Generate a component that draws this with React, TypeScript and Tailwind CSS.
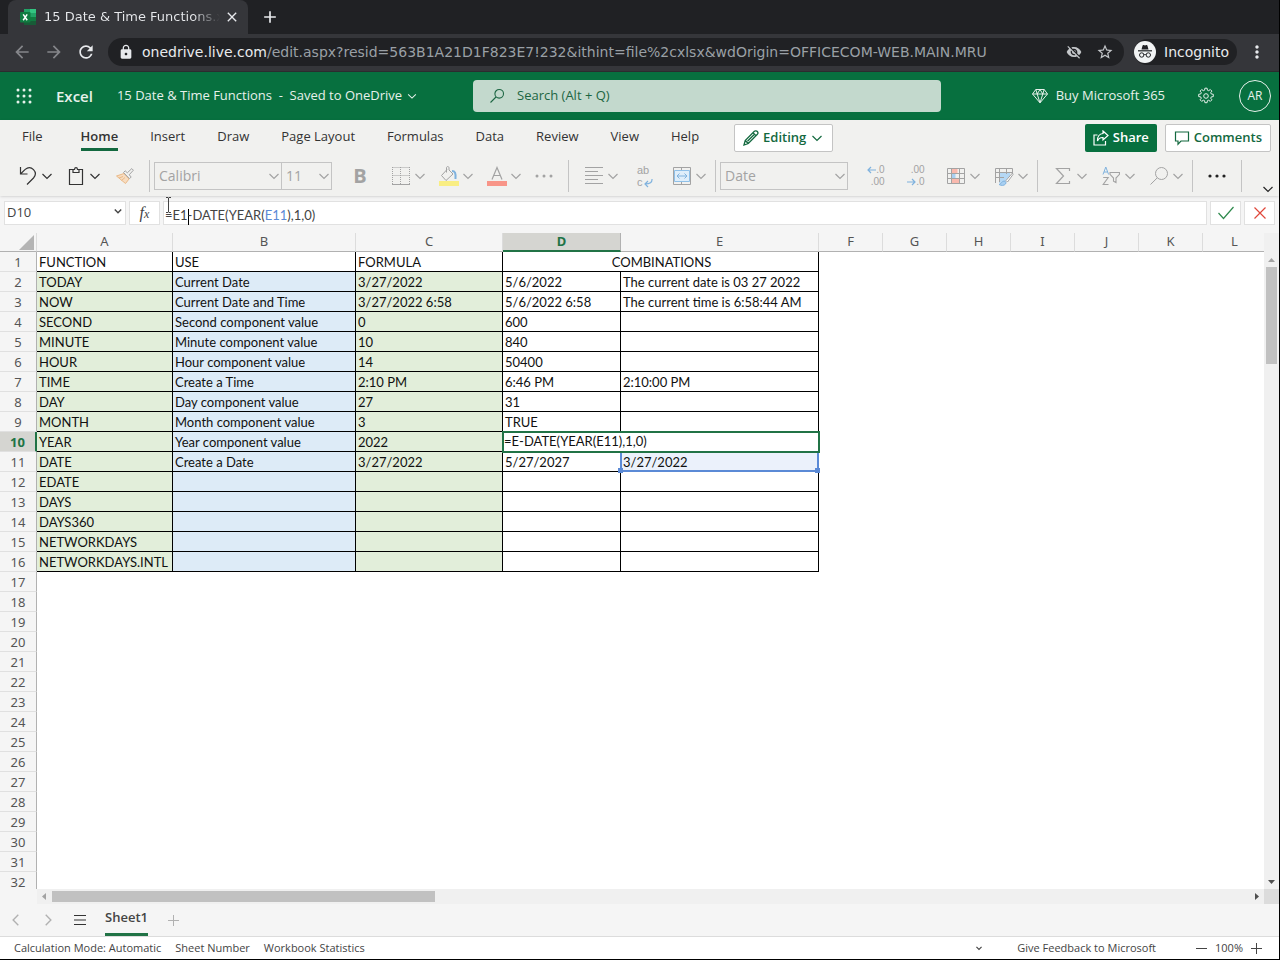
import React, { useState } from 'react';
import clsx from 'clsx';
import {
  MdAdd,
  MdArrowBack,
  MdArrowForward,
  MdClose,
  MdLock,
  MdMoreVert,
  MdRefresh,
  MdStarBorder,
  MdVisibilityOff,
} from 'react-icons/md';

type SheetRow = [string, string, string, string, string];

const rows: SheetRow[] = [
  ['TODAY', 'Current Date', '3/27/2022', '5/6/2022', 'The current date is 03 27 2022'],
  ['NOW', 'Current Date and Time', '3/27/2022 6:58', '5/6/2022 6:58', 'The current time is 6:58:44 AM'],
  ['SECOND', 'Second component value', '0', '600', ''],
  ['MINUTE', 'Minute component value', '10', '840', ''],
  ['HOUR', 'Hour component value', '14', '50400', ''],
  ['TIME', 'Create a Time', '2:10 PM', '6:46 PM', '2:10:00 PM'],
  ['DAY', 'Day component value', '27', '31', ''],
  ['MONTH', 'Month component value', '3', 'TRUE', ''],
  ['YEAR', 'Year component value', '2022', '', ''],
  ['DATE', 'Create a Date', '3/27/2022', '5/27/2027', '3/27/2022'],
  ['EDATE', '', '', '', ''],
  ['DAYS', '', '', '', ''],
  ['DAYS360', '', '', '', ''],
  ['NETWORKDAYS', '', '', '', ''],
  ['NETWORKDAYS.INTL', '', '', '', ''],
];

const columns = ['A', 'B', 'C', 'D', 'E', 'F', 'G', 'H', 'I', 'J', 'K', 'L'];
const emptyRows = Array.from({ length: 16 }, (_, i) => i + 17);
const ribbonTabs = ['File', 'Home', 'Insert', 'Draw', 'Page Layout', 'Formulas', 'Data', 'Review', 'View', 'Help'];

const Chevron = ({ className = 'size-3.5' }: { className?: string }) => (
  <svg viewBox="0 0 14 14" fill="none" stroke="currentColor" strokeWidth="1.2" className={clsx('shrink-0', className)}>
    <path d="M2.5 5 7 9.5 11.5 5" />
  </svg>
);

const Separator = ({ className }: { className?: string }) => (
  <div className={clsx('h-8 w-px shrink-0 bg-[#c4c4c4]', className)} />
);

interface ToolProps {
  label: string;
  children: React.ReactNode;
  className?: string;
}

const MenuTool = ({ label, children, className = 'text-[#a3a3a3]' }: ToolProps) => (
  <button aria-label={label} className={clsx('flex h-8 w-11 shrink-0 items-center', className)}>
    <span className="flex w-[25px] justify-center">{children}</span>
    <Chevron />
  </button>
);

const Tool = ({ label, children, className }: ToolProps) => (
  <button aria-label={label} className={clsx('flex h-8 shrink-0 items-center justify-center text-[#a3a3a3]', className)}>
    {children}
  </button>
);

const ToolSelect = ({ label, value, className }: { label: string; value: string; className: string }) => (
  <div className={clsx('relative h-7 shrink-0 border border-[#c4c4c4] text-[#a3a3a3]', className)}>
    <select aria-label={label} className="h-full w-full appearance-none bg-transparent px-1 text-sm">
      <option>{value}</option>
    </select>
    <Chevron className="pointer-events-none absolute top-1.5 right-0 size-3.5" />
  </div>
);

const ExcelIcon = () => (
  <svg viewBox="0 0 16 16" className="size-4 shrink-0">
    <path d="M4 0h6v4H4z" fill="#21a366" />
    <path d="M10 0h6v4h-6z" fill="#33c481" />
    <path d="M4 4h6v4H4z" fill="#107c41" />
    <path d="M10 4h6v4h-6z" fill="#21a366" />
    <path d="M4 8h6v8H4z" fill="#185c37" />
    <path d="M10 8h6v4h-6z" fill="#107c41" />
    <path d="M10 12h6v4h-6z" fill="#185c37" />
    <rect y="3" width="10.500" height="10.500" rx="1" fill="#107c41" />
    <path d="m3.200 5.400 4 5.800M7.200 5.400l-4 5.800" stroke="#fff" strokeWidth="1.500" />
  </svg>
);

const BrowserBar = () => (
  <div className="shrink-0 bg-[#202124] font-['DejaVu_Sans',sans-serif] text-[#e8eaed]">
    <div className="flex h-[34px] items-end pl-2">
      <div className="flex h-[34px] w-60 items-center rounded-t-lg bg-[#35363a] pr-2 pl-3">
        <ExcelIcon />
        <span className="ml-2 w-[176px] overflow-hidden bg-gradient-to-r from-[#e8eaed] from-85% to-[#35363a] bg-clip-text text-[13px] whitespace-nowrap text-transparent">
          15 Date &amp; Time Functions.xlsx
        </span>
        <button aria-label="Close tab" className="ml-1">
          <MdClose className="size-4" />
        </button>
      </div>
      <button aria-label="New tab" className="ml-3 flex h-[34px] items-center">
        <MdAdd className="size-5" />
      </button>
    </div>
    <div className="flex h-[38px] items-center border-b border-[#2b2c2f] bg-[#35363a] px-3 pb-px">
      <button aria-label="Back" className="text-[#85868a]">
        <MdArrowBack className="size-5" />
      </button>
      <button aria-label="Forward" className="ml-3 text-[#85868a]">
        <MdArrowForward className="size-5" />
      </button>
      <button aria-label="Reload" className="ml-3">
        <MdRefresh className="size-5" />
      </button>
      <div className="ml-3 flex h-7 min-w-0 flex-1 items-center rounded-full bg-[#202124] px-2.5">
        <MdLock className="size-4 shrink-0" />
        <span className="ml-2 min-w-0 flex-1 truncate text-sm text-[#9aa0a6]">
          <span className="text-[#e8eaed]">onedrive.live.com</span>
          /edit.aspx?resid=563B1A21D1F823E7!232&amp;ithint=file%2cxlsx&amp;wdOrigin=OFFICECOM-WEB.MAIN.MRU
        </span>
        <button aria-label="Third-party cookies blocked" className="text-[#c4c7ca]">
          <MdVisibilityOff className="size-4" />
        </button>
        <button aria-label="Bookmark" className="ml-3.5 text-[#c4c7ca]">
          <MdStarBorder className="size-[18px]" />
        </button>
      </div>
      <div className="ml-2.5 flex h-[26px] items-center rounded-full bg-[#202124] pr-2 text-sm">
        <svg viewBox="0 0 22 22" className="mr-2 size-[22px]">
          <circle cx="11" cy="11" r="11" fill="#f1f3f4" />
          <path d="M7.500 8.500 8.600 4.600c.2-.6.600-.7 1.100-.5l1.300.4 1.300-.4c.5-.2.900-.1 1.100.5l1.100 3.900z" fill="#202124" />
          <path d="M4 9.800h14" stroke="#202124" strokeWidth="1.200" />
          <g fill="none" stroke="#202124">
            <circle cx="7.700" cy="14" r="2.200" />
            <circle cx="14.300" cy="14" r="2.200" />
            <path d="M9.900 13.800c.7-.5 1.500-.5 2.200 0" />
          </g>
        </svg>
        Incognito
      </div>
      <button aria-label="Browser menu" className="ml-2.5">
        <MdMoreVert className="size-5" />
      </button>
    </div>
  </div>
);

const AppHeader = () => (
  <header className="flex h-12 shrink-0 items-center bg-[#07703f] pr-2 text-[13px] text-[#e6f1eb]">
    <div className="flex w-[473px] shrink-0 items-center pl-4">
      <button aria-label="App launcher">
        <svg viewBox="0 0 16 16" fill="currentColor" className="size-4">
          {[2, 8, 14].map((y) => [2, 8, 14].map((x) => <circle key={`${x}-${y}`} cx={x} cy={y} r="1.500" />))}
        </svg>
      </button>
      <span className="ml-6 text-[15px] font-semibold">Excel</span>
      <button className="ml-6 flex items-center gap-1 whitespace-pre">
        {'15 Date & Time Functions  -  Saved to OneDrive'}
        <Chevron className="size-3" />
      </button>
    </div>
    <label className="flex h-8 max-w-[468px] flex-1 items-center rounded-sm bg-[#c3d9cd] px-4 text-[#1c6643]">
      <svg viewBox="0 0 16 16" fill="none" stroke="currentColor" strokeWidth="1.100" className="size-4">
        <circle cx="10.200" cy="5.800" r="4.300" />
        <path d="m7 9-5.500 5.500" />
      </svg>
      <input
        aria-label="Search"
        placeholder="Search (Alt + Q)"
        className="ml-3 flex-1 bg-transparent outline-none placeholder:text-[#1c6643]"
      />
    </label>
    <div className="ml-auto flex items-center">
      <button className="flex items-center gap-2">
        <svg viewBox="0 0 16 16" fill="none" stroke="currentColor" className="size-4">
          <path d="M3.800 1.500h8.400L15.500 6 8 14.800.5 6zM.5 6h15M3.800 1.500 5.200 6 8 14.800 10.800 6l1.400-4.500M5.200 6 8 1.500 10.800 6" />
        </svg>
        Buy Microsoft 365
      </button>
      <button aria-label="Settings" className="ml-8">
        <svg viewBox="0 0 18 18" fill="none" stroke="currentColor" className="size-[18px]">
          <circle cx="9" cy="9" r="2.300" />
          <path d="m7.600 3.200.3-2h2.200l.3 2 1.300.5 1.600-1.200 1.600 1.600-1.200 1.600.6 1.300 2 .3v2.300l-2 .3-.6 1.300 1.200 1.600-1.600 1.600-1.600-1.200-1.300.5-.3 2H7.900l-.3-2-1.300-.5-1.600 1.200-1.600-1.600 1.200-1.600-.6-1.300-2-.3V7.300l2-.3.6-1.300-1.200-1.600 1.600-1.600 1.600 1.200z" />
        </svg>
      </button>
      <button className="ml-6 size-8 rounded-full border border-[#e6f1eb] text-xs">AR</button>
    </div>
  </header>
);

const RibbonTabs = () => {
  const [active, setActive] = useState('Home');

  return (
    <div className="flex h-9 items-start pr-2 pl-[22px] text-[13px] text-[#333]">
      <nav className="flex gap-8">
        {ribbonTabs.map((tab) => (
          <button
            key={tab}
            onClick={() => setActive(tab)}
            className={clsx(
              'flex h-[31px] items-center border-b-3 pt-1.5',
              active === tab ? 'border-[#13693f] font-semibold' : 'border-transparent',
              tab === 'File' && 'mr-1.5',
            )}
          >
            {tab}
          </button>
        ))}
      </nav>
      <button className="mt-1 ml-[35px] flex h-7 items-center gap-1 rounded-xs border border-[#c4c4c4] bg-white px-2 font-semibold text-[#13693f]">
        <svg viewBox="0 0 16 16" fill="none" stroke="currentColor" strokeWidth="1.300" className="size-4">
          <path d="M1 15 2.200 10.500 11.400 1.300c.8-.8 2.300-.5 2.900.2.700.8.800 2 .1 2.700L5.300 13.500zM10 2.700 13 5.700M2.200 10.500l3.100 3M4.500 11.300l6.500-6.500" />
        </svg>
        Editing
        <Chevron className="size-3.5" />
      </button>
      <div className="mt-1 ml-auto flex gap-2 font-semibold">
        <button className="flex h-7 items-center gap-1 rounded-xs bg-[#07703f] px-2 text-white">
          <svg viewBox="0 0 16 16" fill="none" stroke="currentColor" strokeWidth="1.200" className="size-4">
            <path d="M4.500 5H1v10h11.500v-4M10 1l5 4.500-5 4.500V7.500C7.500 7.300 5.700 8.300 4.500 11 4.300 7 6.300 3.800 10 3.500z" />
          </svg>
          Share
        </button>
        <button className="flex h-7 items-center gap-1 rounded-xs border border-[#c4c4c4] bg-white px-2 text-[#13693f]">
          <svg viewBox="0 0 16 16" fill="none" stroke="currentColor" strokeWidth="1.200" className="size-4">
            <path d="M1.500 2h13v9H7l-3 3.200V11H1.500z" />
          </svg>
          Comments
        </button>
      </div>
    </div>
  );
};

const RibbonTools = () => (
  <div className="flex h-10 items-center pl-[15px] text-[13px]">
    <div className="flex gap-1">
      <MenuTool label="Undo" className="text-[#333]">
        <svg viewBox="0 0 18 18" fill="none" stroke="currentColor" strokeWidth="1.200" className="size-[18px]">
          <path d="M1.500 0v7h7M1.500 7 6.200 2.400C9 .2 12.200.4 14.500 2.700c2.400 2.600 2.300 5.800 0 8.300L8 17.500" />
        </svg>
      </MenuTool>
      <MenuTool label="Paste" className="text-[#333]">
        <svg viewBox="0 0 16 18" fill="none" stroke="currentColor" strokeWidth="1.200" className="h-[18px] w-4">
          <path d="M5 2.500H1.500v15h13v-15H11M5 5.500v-3h1.500C6.700 0 9.300 0 9.500 2.500H11v3z" />
        </svg>
      </MenuTool>
    </div>
    <Tool label="Format painter" className="ml-1 w-7">
      <svg viewBox="0 0 18 18" fill="none" className="size-[18px]">
        <path d="M.5 9 8 6.500l5 5.500-3.500 4.500z" fill="#f7dcc0" stroke="#eab987" />
        <path d="m3 11 4-1.500M5.500 13.500 9 10.500" stroke="#eab987" />
        <path d="m7.500 5.500 6 6.200 1.700-1.700-2-2.200 4.200-4.600-1.600-1.600-4.500 4.200-2.100-2z" fill="#f1f1ef" stroke="#a3a3a3" />
      </svg>
    </Tool>
    <Separator className="ml-2.5" />
    <ToolSelect label="Font" value="Calibri" className="ml-1 w-32" />
    <ToolSelect label="Font size" value="11" className="w-[50px] border-l-0" />
    <Tool label="Bold" className="ml-2 w-10 text-xl font-bold">
      B
    </Tool>
    <div className="ml-2 flex gap-1">
      <MenuTool label="Borders">
        <svg viewBox="0 0 18 18" fill="none" stroke="currentColor" className="size-[18px]">
          <path d="M.5.500h17M.5 8.500h17M.5 0v17M8.500 0v17M17.500 0v17" strokeDasharray="1 1" />
          <path d="M0 17.500h18" />
        </svg>
      </MenuTool>
      <MenuTool label="Fill color">
        <svg viewBox="0 0 22 20" fill="none" className="h-5 w-[22px]">
          <path d="m9 3.500-5.500 6 4.500 5 7-6.500-4-4v-2c0-2-2.500-2-2.500 0v4.500" stroke="#a3a3a3" />
          <path d="M14 5c3 0 4 2 3.500 8" stroke="#7fb2de" strokeWidth="2" />
          <path d="M1 15h20v5H1z" fill="#f9ee83" />
        </svg>
      </MenuTool>
      <MenuTool label="Font color">
        <svg viewBox="0 0 20 20" fill="none" className="size-5">
          <path d="M5 13.500 10 1.500l5 12M6.500 9.500h7" stroke="#a3a3a3" strokeWidth="1.200" />
          <path d="M0 15h20v5H0z" fill="#f89588" />
        </svg>
      </MenuTool>
    </div>
    <Tool label="More font options" className="ml-1 w-6">
      <svg viewBox="0 0 18 4" fill="currentColor" className="h-1 w-[18px]">
        <circle cx="2" cy="2" r="1.500" />
        <circle cx="9" cy="2" r="1.500" />
        <circle cx="16" cy="2" r="1.500" />
      </svg>
    </Tool>
    <Separator className="ml-3" />
    <div className="ml-3 flex">
      <MenuTool label="Align">
        <svg viewBox="0 0 18 18" stroke="currentColor" className="size-[18px]">
          <path d="M0 .5h18M0 4.500h13M0 8.500h18M0 12.500h13M0 16.500h18" />
        </svg>
      </MenuTool>
      <Tool label="Wrap text" className="ml-1 w-7">
        <span className="relative flex flex-col items-start font-['Liberation_Sans',sans-serif] text-[11px] leading-3">
          <span>ab</span>
          <span>c</span>
          <svg viewBox="0 0 9 9" fill="none" stroke="#7fb2de" className="absolute -right-1 bottom-0 size-[9px]">
            <path d="M8 0c.3 3.500-2 5-7 5m3-3-3 3 3 3" strokeWidth="1.200" />
          </svg>
        </span>
      </Tool>
      <MenuTool label="Merge and center" className="ml-3 text-[#a3a3a3]">
        <svg viewBox="0 0 18 18" fill="none" className="size-[18px]">
          <path d="M.5.500h17v17H.5zM8.500.5v4M8.500 13.500v4" stroke="#a3a3a3" />
          <path d="M1.500 3.500h15v11h-15z" fill="#dfeefa" stroke="#8fc0e8" />
          <path d="M4 9h10M6.500 6.500 4 9l2.500 2.500M11.500 6.500 14 9l-2.500 2.500" stroke="#7fb2de" />
        </svg>
      </MenuTool>
    </div>
    <Separator className="ml-0.5" />
    <ToolSelect label="Number format" value="Date" className="ml-1 w-32" />
    <Tool label="Increase decimal" className="ml-2 w-10">
      <span className="flex flex-col items-end font-['Liberation_Sans',sans-serif] text-[10px] leading-3">
        <span className="flex items-center">
          <svg viewBox="0 0 9 8" fill="none" stroke="#7fb2de" className="h-2 w-[9px]">
            <path d="M9 4H1m3-3L1 4l3 3" strokeWidth="1.200" />
          </svg>
          .0
        </span>
        <span>.00</span>
      </span>
    </Tool>
    <Tool label="Decrease decimal" className="w-10">
      <span className="flex flex-col items-end font-['Liberation_Sans',sans-serif] text-[10px] leading-3">
        <span>.00</span>
        <span className="flex items-center">
          <svg viewBox="0 0 9 8" fill="none" stroke="#7fb2de" className="h-2 w-[9px]">
            <path d="M0 4h8M5 1l3 3-3 3" strokeWidth="1.200" />
          </svg>
          .0
        </span>
      </span>
    </Tool>
    <div className="ml-[7px] flex gap-1">
      <MenuTool label="Conditional formatting">
        <svg viewBox="0 0 18 18" fill="none" className="size-[18px]">
          <path d="M4.500 1h6v5h-6zM4.500 12h8v5h-8z" fill="#f9b9ae" />
          <path d="M4.500 6h4v6h-4z" fill="#a9d0f2" />
          <path d="M.5 1.500h17v15H.5zM.5 6.500h17M.5 11.500h17M4.500 1v15M12.500 1v15" stroke="#a3a3a3" />
        </svg>
      </MenuTool>
      <MenuTool label="Format as table">
        <svg viewBox="0 0 20 20" fill="none" className="size-5">
          <path d="M5 6h11v4l-6 7H5z" fill="#b5d8f5" />
          <path d="M1.500 17V2.500h17V8M1.500 6.500h17M1.500 11.500H10M5.500 2v14M12.500 2v6" stroke="#a3a3a3" />
          <path d="M18.500 7 12 14.500l1.500 1.500L19 8.500z" fill="#fff" stroke="#a3a3a3" />
          <path d="M5 18.500c2-.5 2.500-3 5-3.500 2 .3 2.500 1.500 1.500 3-1.500 1.800-4 1.800-6.500.5z" fill="#a9d0f2" stroke="#7fb2de" />
        </svg>
      </MenuTool>
    </div>
    <Separator className="ml-0.5" />
    <div className="ml-3 flex gap-1">
      <MenuTool label="AutoSum">
        <svg viewBox="0 0 16 18" fill="none" stroke="currentColor" strokeWidth="1.200" className="h-[18px] w-4">
          <path d="M14.500 4V1.500H1.500L8.500 9l-7 7.500h13V14" />
        </svg>
      </MenuTool>
      <MenuTool label="Sort and filter">
        <svg viewBox="0 0 18 20" fill="none" className="h-5 w-[18px]">
          <path d="M1 8.500 3.800 1l2.800 7.500M2 6h3.600" stroke="#7fb2de" />
          <path d="M1.200 11.500h5l-5 7h5.300M8 6.500h9.500v1.800L14 12v4.500l-2.500-1.300V12L8 8.300z" stroke="#a3a3a3" strokeWidth="1.100" />
        </svg>
      </MenuTool>
      <MenuTool label="Find">
        <svg viewBox="0 0 18 18" fill="none" stroke="currentColor" className="size-[18px]">
          <circle cx="11.500" cy="6.500" r="6" />
          <path d="M7.300 10.800.5 17.500" />
        </svg>
      </MenuTool>
    </div>
    <Separator className="ml-0.5" />
    <button aria-label="More commands" className="ml-3 flex h-8 w-6 items-center justify-center text-[#222]">
      <svg viewBox="0 0 18 4" fill="currentColor" className="h-1 w-[18px]">
        <circle cx="2" cy="2" r="1.600" />
        <circle cx="9" cy="2" r="1.600" />
        <circle cx="16" cy="2" r="1.600" />
      </svg>
    </button>
    <Separator className="ml-3" />
    <button aria-label="Collapse ribbon" className="mr-1 ml-auto self-end text-[#222]">
      <Chevron />
    </button>
  </div>
);

const FormulaBar = () => (
  <div className="flex h-[37px] shrink-0 items-start gap-[3px] bg-[#f5f5f5] px-1 pt-[5px] text-[13px] text-[#444]">
    <label className="relative flex h-6 w-[122px] items-center border border-[#e1e1e1] bg-white">
      <input aria-label="Name box" defaultValue="D10" className="w-full bg-transparent px-0.5 outline-none" />
      <Chevron className="absolute top-1 right-0.5 size-2.5 stroke-2" />
    </label>
    <button
      aria-label="Insert function"
      className="h-6 w-[31px] border border-[#e1e1e1] bg-white font-['Liberation_Serif',serif] text-base leading-5 italic"
    >
      f<span className="text-xs">x</span>
    </button>
    <div className="relative h-6 flex-1">
      <div
        role="textbox"
        aria-label="Formula bar"
        contentEditable
        suppressContentEditableWarning
        className="h-full border border-[#e1e1e1] bg-white pt-[3px] pl-px font-[Lato,sans-serif] leading-5 whitespace-nowrap outline-none"
      >
        =E1
        <span className="-mr-px inline-block h-4 w-px bg-black align-middle" />
        -DATE(YEAR(<span className="text-[#5b8ad6]">E11</span>),1,0)
      </div>
      <svg viewBox="0 0 7 16" fill="none" stroke="#444" className="absolute -top-1 left-0.5 h-4 w-[7px]">
        <path d="M1 .5h2l.5.500.5-.5h2M3.500 1v14M1 15.500h2l.5-.5.500.5h2" />
      </svg>
    </div>
    <button aria-label="Enter" className="flex h-6 w-[31px] items-center justify-center border border-[#e1e1e1] bg-white">
      <svg viewBox="0 0 18 16" fill="none" stroke="#2f8a4d" strokeWidth="1.200" className="h-4 w-[18px]">
        <path d="m1.500 8 5 5.500L16.500 2" />
      </svg>
    </button>
    <button aria-label="Cancel" className="flex h-6 w-[31px] items-center justify-center border border-[#e1e1e1] bg-white">
      <svg viewBox="0 0 14 14" fill="none" stroke="#e0473a" strokeWidth="1.200" className="size-3.5">
        <path d="m1.500 1.500 11 11M12.500 1.500l-11 11" />
      </svg>
    </button>
  </div>
);

const RowHeader = ({ row, active }: { row: number; active?: boolean }) => (
  <th
    scope="row"
    className={clsx(
      "h-5 border-b border-b-[#e0e0e0] p-0 text-center font-['Noto_Sans',sans-serif] text-[13px] leading-[18px]",
      active
        ? 'border-r-2 border-r-[#217346] bg-[#d5d5d1] font-bold text-[#217346]'
        : 'border-r border-r-[#b1b1b1] bg-[#f5f5f5] font-normal text-[#555]',
    )}
  >
    {row}
  </th>
);

const cellClass = 'h-5 overflow-hidden border-r border-b border-black p-0 pl-0.5 leading-[18px] whitespace-nowrap';
const fills = ['bg-[#e2eeda]', 'bg-[#ddebf7]', 'bg-[#e2eeda]', '', ''];

const Grid = () => (
  <div className="flex min-h-0 flex-1 bg-white">
    <div className="min-w-0 flex-1 overflow-hidden">
      <table className="w-[1267px] table-fixed border-separate border-spacing-0 text-[13px] text-[#111]">
        <colgroup>
          <col className="w-[37px]" />
          <col className="w-[136px]" />
          <col className="w-[183px]" />
          <col className="w-[147px]" />
          <col className="w-[118px]" />
          <col className="w-[198px]" />
          {columns.slice(5).map((column) => (
            <col key={column} className="w-16" />
          ))}
        </colgroup>
        <thead className="font-['Noto_Sans',sans-serif]">
          <tr>
            <td className="h-[19px] border-r border-b border-r-[#dcdcdc] border-b-[#b1b1b1] bg-[#f5f5f5] p-0">
              <svg viewBox="0 0 15 15" className="mr-0.5 ml-auto size-[15px]">
                <path d="M15 0v15H0z" fill="#b4b4b4" />
              </svg>
            </td>
            {columns.map((column) => (
              <th
                key={column}
                scope="col"
                className={clsx(
                  'h-[19px] border-r p-0 align-top text-[13px] leading-4',
                  column === 'D'
                    ? 'border-b-2 border-r-[#b1b1b1] border-b-[#217346] bg-[#d5d5d1] font-bold text-[#217346]'
                    : 'border-b border-r-[#dcdcdc] border-b-[#b1b1b1] bg-[#f5f5f5] font-normal text-[#555]',
                )}
              >
                {column}
              </th>
            ))}
          </tr>
        </thead>
        <tbody className="font-[Lato,sans-serif]">
          <tr>
            <RowHeader row={1} />
            <td className={cellClass}>FUNCTION</td>
            <td className={cellClass}>USE</td>
            <td className={cellClass}>FORMULA</td>
            <td colSpan={2} className={clsx(cellClass, 'text-center')}>
              COMBINATIONS
            </td>
          </tr>
          {rows.map((cells, i) => {
            const row = i + 2;
            return (
              <tr key={row}>
                <RowHeader row={row} active={row === 10} />
                {cells.map((value, c) => {
                  if (row === 10 && c === 4) return null;
                  // cell being edited spills over into E
                  if (row === 10 && c === 3) {
                    return (
                      <td key={c} colSpan={2} className="relative h-5 border-r border-b border-black p-0">
                        <input
                          aria-label="Cell D10"
                          defaultValue="=E-DATE(YEAR(E11),1,0)"
                          className="absolute -top-px -right-0.5 -bottom-0.5 -left-px z-10 border-2 border-[#217346] bg-white outline-none"
                        />
                      </td>
                    );
                  }
                  // E11 is referenced by the formula
                  if (row === 11 && c === 4) {
                    return (
                      <td key={c} className="relative h-5 border-r border-b border-black bg-[#ebf1fb] p-0 pl-0.5 leading-[18px]">
                        {value}
                        <span className="absolute -top-px -right-px -bottom-px -left-px border-2 border-t-0 border-[#5b8ad6]" />
                        <span className="absolute -bottom-0.5 -left-[3px] size-[5px] bg-[#5b8ad6]" />
                        <span className="absolute -right-0.5 -bottom-0.5 size-[5px] bg-[#5b8ad6]" />
                      </td>
                    );
                  }
                  return (
                    <td key={c} className={clsx(cellClass, fills[c])}>
                      {value}
                    </td>
                  );
                })}
              </tr>
            );
          })}
          {emptyRows.map((row) => (
            <tr key={row}>
              <RowHeader row={row} />
            </tr>
          ))}
        </tbody>
      </table>
    </div>
    <div className="flex w-[15px] shrink-0 flex-col items-center bg-[#f0f0f0] pt-[19px]">
      <svg viewBox="0 0 15 15" className="size-[15px]">
        <path d="M4 10h7L7.500 6z" fill="#a3a3a3" />
      </svg>
      <div className="w-full flex-1 px-0.5">
        <div className="h-[16%] bg-[#c1c1c1]" />
      </div>
      <svg viewBox="0 0 15 15" className="size-[15px]">
        <path d="M4 6h7l-3.500 4z" fill="#505050" />
      </svg>
    </div>
  </div>
);

const HorizontalScroll = () => (
  <div className="flex h-[15px] shrink-0 bg-[#f5f5f5] pl-[37px]">
    <div className="flex flex-1 bg-[#f0f0f0]">
      <svg viewBox="0 0 15 15" className="size-[15px]">
        <path d="M9 4v7L5 7.500z" fill="#a3a3a3" />
      </svg>
      <div className="flex-1 py-0.5">
        <div className="h-full w-[32%] bg-[#c1c1c1]" />
      </div>
      <svg viewBox="0 0 15 15" className="size-[15px]">
        <path d="M6 4v7l4-3.500z" fill="#505050" />
      </svg>
    </div>
    <div className="w-[15px] bg-[#dcdcdc]" />
  </div>
);

const SheetTabs = () => (
  <div className="flex h-8 shrink-0 items-center bg-[#f5f5f5] pl-2 text-[#b1b1b1]">
    <button aria-label="Previous sheet">
      <Chevron className="size-4 rotate-90" />
    </button>
    <button aria-label="Next sheet" className="ml-4">
      <Chevron className="size-4 -rotate-90" />
    </button>
    <button aria-label="All sheets" className="ml-[18px] text-[#333]">
      <svg viewBox="0 0 12 10" stroke="currentColor" className="h-2.5 w-3">
        <path d="M0 .5h12M0 5h12M0 9.500h12" />
      </svg>
    </button>
    <button className="ml-[19px] h-8 border-b-3 border-[#217346] pb-0.5 text-[13px] font-semibold text-[#444]">Sheet1</button>
    <button aria-label="New sheet" className="ml-5">
      <svg viewBox="0 0 11 11" stroke="currentColor" className="size-[11px]">
        <path d="M5.500 0v11M0 5.500h11" />
      </svg>
    </button>
  </div>
);

const StatusBar = () => (
  <footer className="flex h-[23px] shrink-0 items-center border-t border-[#dcdcdc] bg-white pr-[17px] pl-3.5 text-[11px] text-[#444]">
    <span>Calculation Mode: Automatic</span>
    <span className="ml-3.5">Sheet Number</span>
    <span className="ml-3.5">Workbook Statistics</span>
    <button aria-label="Status options" className="ml-auto">
      <Chevron className="size-2 stroke-2" />
    </button>
    <button className="ml-[34px]">Give Feedback to Microsoft</button>
    <button aria-label="Zoom out" className="ml-10">
      <svg viewBox="0 0 11 11" stroke="currentColor" className="size-[11px]">
        <path d="M0 5.500h11" />
      </svg>
    </button>
    <span className="ml-2">100%</span>
    <button aria-label="Zoom in" className="ml-2">
      <svg viewBox="0 0 11 11" stroke="currentColor" className="size-[11px]">
        <path d="M5.500 0v11M0 5.500h11" />
      </svg>
    </button>
  </footer>
);

export default function App() {
  return (
    <div className="flex h-screen flex-col overflow-hidden bg-black pr-px pb-px font-['Open_Sans','Noto_Sans',sans-serif]">
      <BrowserBar />
      <AppHeader />
      <div className="z-10 shrink-0 bg-[#f1f1ef] shadow">
        <RibbonTabs />
        <RibbonTools />
      </div>
      <FormulaBar />
      <Grid />
      <HorizontalScroll />
      <SheetTabs />
      <StatusBar />
    </div>
  );
}
